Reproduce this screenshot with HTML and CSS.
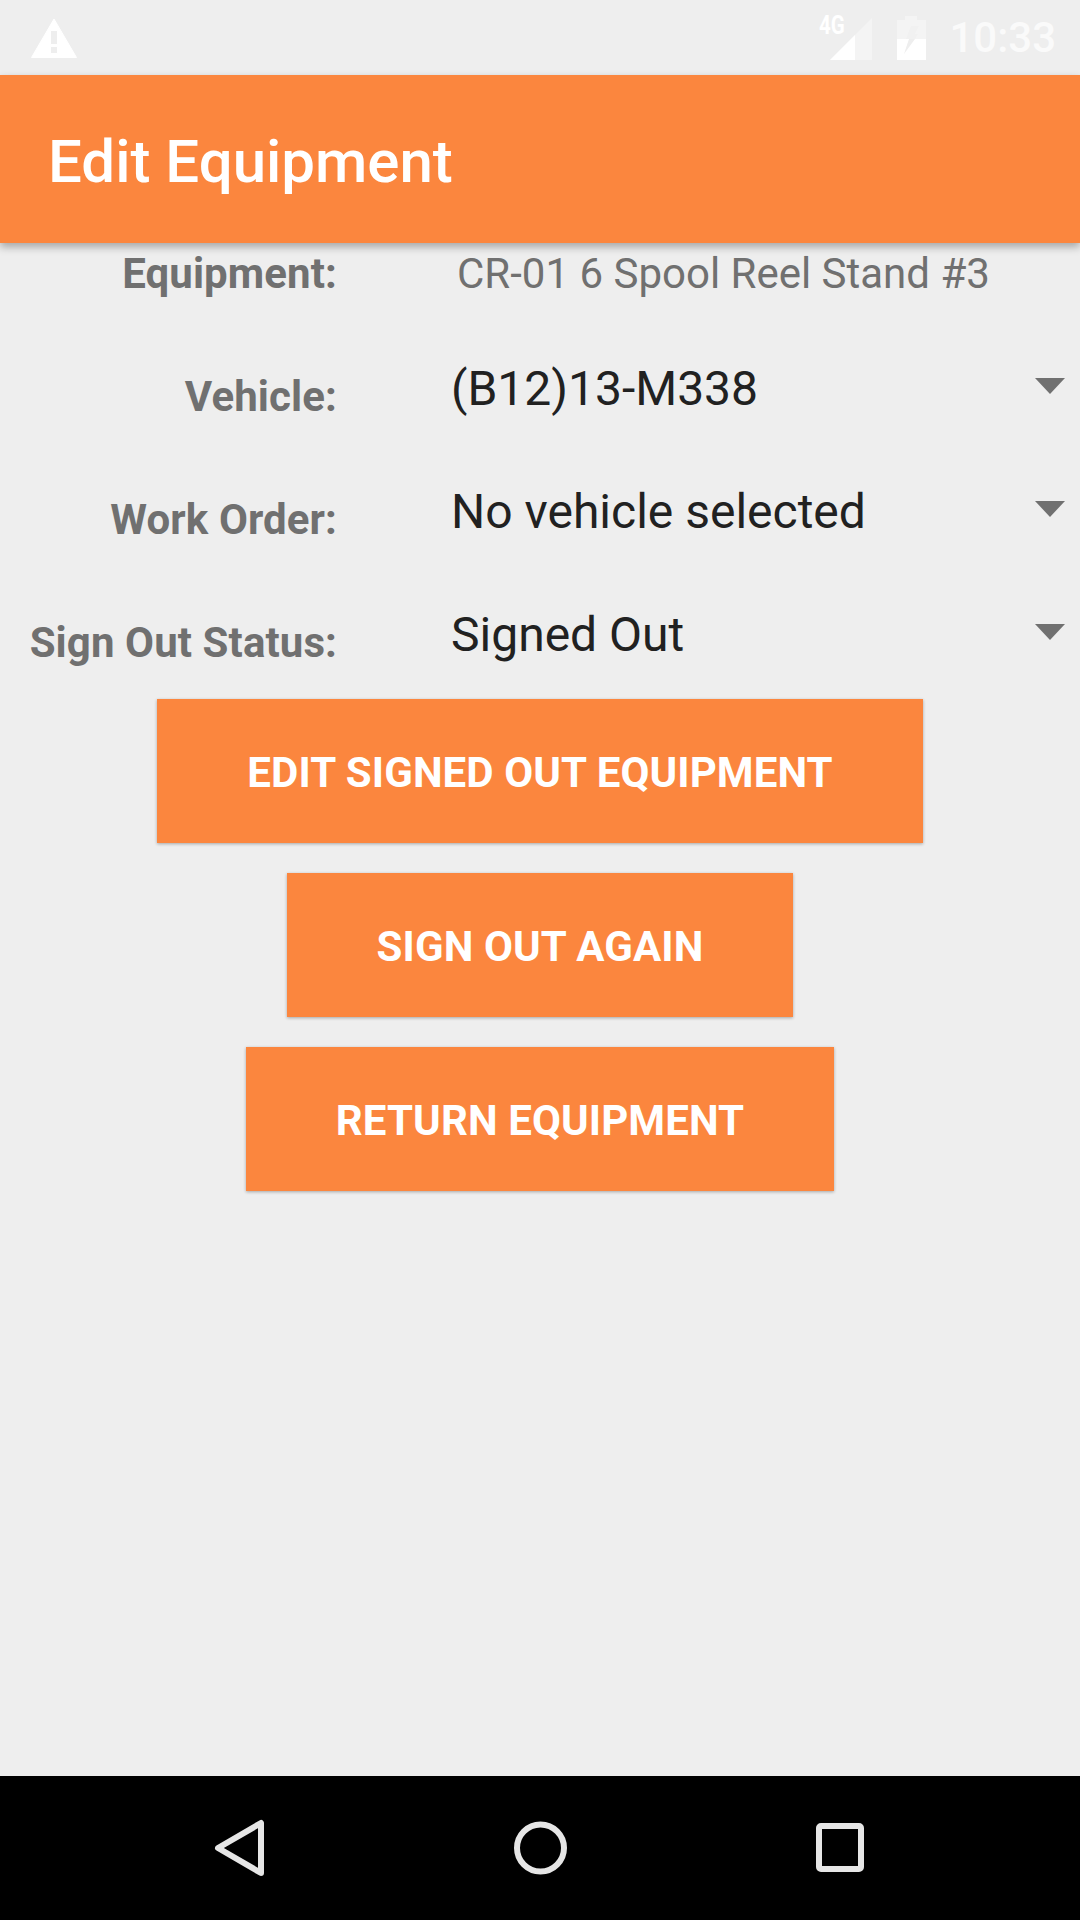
FILE: index.html
```html
<!DOCTYPE html>
<html lang="en">
<head>
    <meta charset="UTF-8">
    <meta name="viewport" content="width=device-width, initial-scale=1.0">
    <title>Edit Equipment</title>
    <link rel="stylesheet" href="styles.css">
</head>
<body>

    <div class="status-bar">
        <svg class="warn-icon" width="46" height="40" viewBox="0 0 46 40">
            <path fill="#fff" fill-rule="evenodd" d="M23 1 L45.500 39.500 H0.500 Z M19.500 12.500 V26.500 H26.500 V12.500 Z M19.500 28.500 V35.500 H26.500 V28.500 Z" stroke="#fff" stroke-width="1" stroke-linejoin="round"/>
        </svg>
        <div class="status-right">
            <svg class="signal-icon" width="42" height="42" viewBox="0 0 42 42">
                <path fill="#fff" fill-opacity="0.35" d="M0 42 L42 0 V42 Z"/>
                <path fill="#fff" d="M0 42 L25 17 V42 Z"/>
            </svg>
            <span class="net-label">4G</span>
            <svg class="battery-icon" width="29" height="44" viewBox="0 0 29 44">
                <path fill="#fff" fill-opacity="0.35" d="M8 0 H20 V4 H29 V23 H0 V4 H8 Z"/>
                <path fill="#fff" d="M0 23 H29 V44 H0 Z"/>
                <path fill="#eee" d="M7 38 L12 23 H18 Z"/>
                <path fill="#f1f1f1" d="M14 10 H22 L18 18 H21 L18 23 H9 Z"/>
            </svg>
            <span class="clock">10:33</span>
        </div>
    </div>

    <header class="app-bar">
        <h1>Edit Equipment</h1>
    </header>

    <main class="content">
        <div class="form-row equipment-row">
            <span class="label">Equipment:</span>
            <span class="value-plain">CR-01 6 Spool Reel Stand #3</span>
        </div>
        <div class="form-row">
            <span class="label">Vehicle:</span>
            <span class="spinner">(B12)13-M338</span>
            <span class="arrow"></span>
        </div>
        <div class="form-row">
            <span class="label">Work Order:</span>
            <span class="spinner">No vehicle selected</span>
            <span class="arrow"></span>
        </div>
        <div class="form-row">
            <span class="label">Sign Out Status:</span>
            <span class="spinner">Signed Out</span>
            <span class="arrow"></span>
        </div>

        <div class="actions">
            <button class="action-btn">Edit Signed Out Equipment</button>
            <button class="action-btn">Sign Out Again</button>
            <button class="action-btn">Return Equipment</button>
        </div>
    </main>

    <nav class="nav-bar">
        <svg width="60" height="60" viewBox="0 0 60 60">
            <path d="M51 5 V55 L8 30 Z" fill="none" stroke="#e6e6e6" stroke-width="6" stroke-linejoin="round"/>
        </svg>
        <svg width="60" height="60" viewBox="0 0 60 60">
            <circle cx="30.500" cy="30" r="23.500" fill="none" stroke="#e6e6e6" stroke-width="6"/>
        </svg>
        <svg width="60" height="60" viewBox="0 0 60 60">
            <rect x="9" y="8" width="42" height="43" rx="2" fill="none" stroke="#e6e6e6" stroke-width="6"/>
        </svg>
    </nav>

</body>
</html>
```

FILE: styles.css
```css
/* General Styles */
* {
    box-sizing: border-box;
}

body {
    font-family: Roboto, sans-serif;
    margin: 0;
    width: 1080px;
    height: 1920px;
    display: flex;
    flex-direction: column;
    background-color: #eeeeee;
    overflow: hidden;
}

/* Status bar */
.status-bar {
    height: 75px;
    flex-shrink: 0;
    display: flex;
    align-items: center;
    justify-content: space-between;
    padding: 0 24px 0 31px;
}

.status-right {
    display: flex;
    align-items: center;
    position: relative;
    height: 75px;
}

.signal-icon {
    margin-top: 2px;
}

.net-label {
    position: absolute;
    left: -11px;
    top: 15px;
    color: #fff;
    font-size: 25px;
    font-weight: 700;
    line-height: 22px;
    transform: scaleX(0.82);
    transform-origin: left center;
}

.battery-icon {
    margin-left: 25px;
}

.clock {
    margin-left: 23px;
    color: #fafafa;
    font-size: 42px;
    font-weight: 500;
}

/* App bar */
.app-bar {
    height: 168px;
    flex-shrink: 0;
    display: flex;
    align-items: center;
    padding: 4px 0 0 48px;
    background-color: #fb863e;
    box-shadow: 0 4px 8px rgba(0, 0, 0, 0.3);
    position: relative;
}

h1 {
    margin: 0;
    color: #fff;
    font-size: 60px;
    font-weight: 500;
}

/* Form rows */
.content {
    flex: 1;
}

.form-row {
    height: 123px;
    display: flex;
    align-items: center;
}

.equipment-row {
    height: 60px;
    margin-bottom: 32px;
}

.label {
    width: 337px;
    text-align: right;
    color: #707070;
    font-size: 42px;
    font-weight: 700;
    letter-spacing: 0.1px;
}

.value-plain {
    margin-left: 120px;
    color: #707070;
    font-size: 42px;
}

.spinner {
    margin-left: 114px;
    margin-top: -16px;
    flex: 1;
    color: #212121;
    font-size: 48px;
}

.arrow {
    width: 0;
    height: 0;
    margin: -22px 15px 0 0;
    border-left: 15px solid transparent;
    border-right: 15px solid transparent;
    border-top: 16px solid #707070;
}

/* Buttons */
.actions {
    display: flex;
    flex-direction: column;
    align-items: center;
    gap: 30px;
    margin-top: -5px;
}

.action-btn {
    height: 144px;
    padding: 2px 90px 0;
    border: none;
    background-color: #fb863e;
    color: #fff;
    font-family: Roboto, sans-serif;
    font-size: 42px;
    font-weight: 700;
    letter-spacing: 0.1px;
    text-transform: uppercase;
    box-shadow: 0 1px 3px rgba(0, 0, 0, 0.3);
}

/* Nav bar */
.nav-bar {
    height: 144px;
    flex-shrink: 0;
    background-color: #000;
    display: grid;
    grid-template-columns: repeat(3, 1fr);
    align-items: center;
    justify-items: center;
    padding: 0 90px;
}
```
